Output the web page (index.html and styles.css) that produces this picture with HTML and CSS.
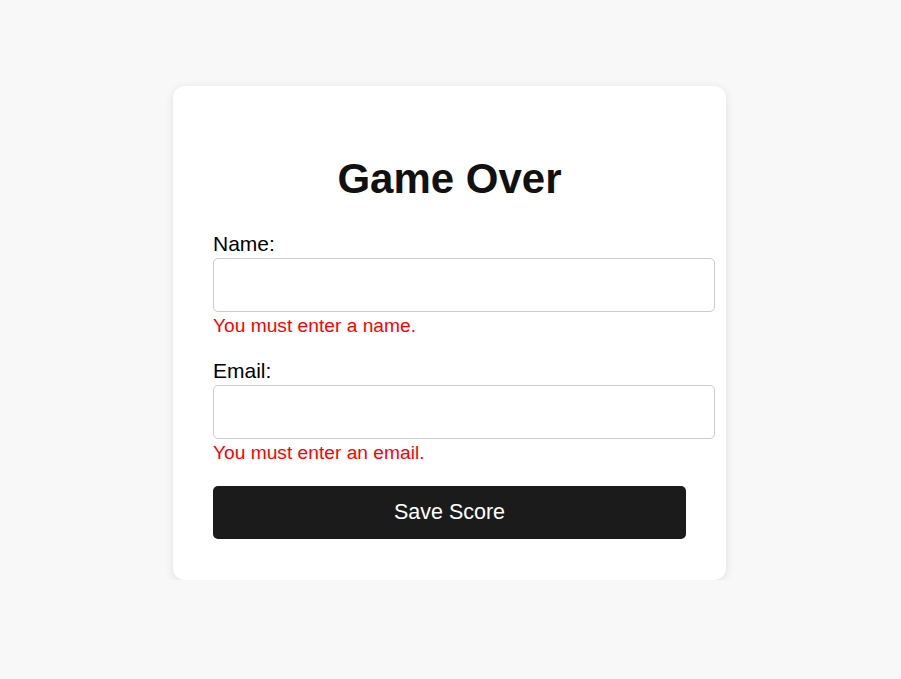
FILE: index.html
```html
<!DOCTYPE html>
<html lang="en">
<head>
<meta charset="utf-8">
<title>Game Over</title>
<link rel="stylesheet" href="styles.css">
</head>
<body>
<main class="page">
  <section class="card">
    <h1 class="title">Game Over</h1>
    <form class="form">
      <div class="field">
        <label class="label" for="name">Name:</label>
        <input class="input" id="name" type="text">
        <p class="error">You must enter a name.</p>
      </div>
      <div class="field">
        <label class="label" for="email">Email:</label>
        <input class="input" id="email" type="email">
        <p class="error">You must enter an email.</p>
      </div>
      <button class="button" type="button">Save Score</button>
    </form>
  </section>
</main>
</body>
</html>
```

FILE: styles.css
```css
html, body {
  margin: 0;
  padding: 0;
  background: #f8f8f8;
  font-family: "Liberation Sans", Arial, sans-serif;
  color: #000;
}

.page {
  display: flex;
  justify-content: center;
  padding: 86px 2px 0 0;
}

.card {
  width: 473px;
  padding: 40px 40px 41px;
  background: #fff;
  border-radius: 12px;
  box-shadow: 0 2px 10px rgba(0, 0, 0, 0.1);
}

.title {
  margin: 29px 0 29px;
  font-size: 42px;
  line-height: 48px;
  font-weight: bold;
  text-align: center;
  color: #111;
}

.form {
  display: flex;
  flex-direction: column;
  gap: 22px;
}

.field {
  display: flex;
  flex-direction: column;
}

.label {
  font-size: 21px;
  line-height: 24px;
}

.input {
  box-sizing: border-box;
  width: calc(100% + 29px);
  height: 54px;
  margin-top: 2px;
  padding: 0 14px;
  border: 1px solid #ccc;
  border-radius: 5px;
  font: inherit;
  font-size: 16px;
  background: #fff;
}

.error {
  margin: 3px 0 0;
  font-size: 19.2px;
  line-height: 22px;
  color: #ff0000;
}

.button {
  height: 53px;
  border: none;
  border-radius: 5px;
  background: #1b1b1b;
  color: #fff;
  font-family: inherit;
  font-size: 21.5px;
  cursor: pointer;
}
```
